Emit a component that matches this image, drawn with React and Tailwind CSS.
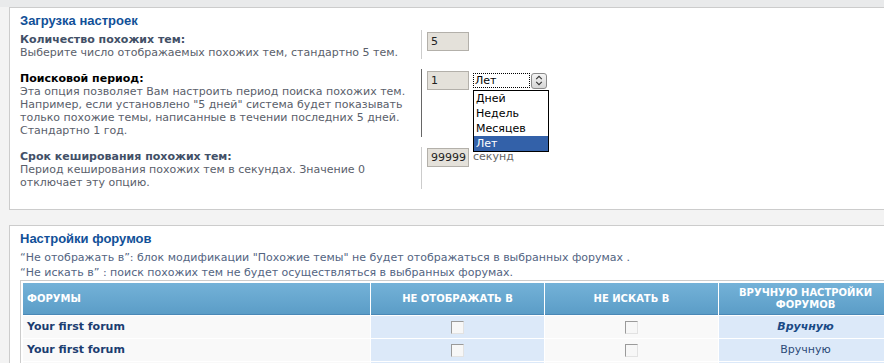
export default function App() {
  const labelCls = "font-bold text-[#425067] leading-[13px]";
  const descCls = "text-[#5a606b] leading-[13px] whitespace-nowrap";
  const inputCls =
    "w-[42px] h-[19px] border border-[#b3b0aa] bg-[#e4e1da] pl-[3px] text-[11px] leading-[17px] text-[#222]";
  const Check = () => (
    <span className="block w-[13px] h-[13px] border border-t-[#9a9a9a] border-l-[#9a9a9a] border-b-[#e2e2e2] border-r-[#e2e2e2] bg-[#f7f7f7]" />
  );
  return (
    <div className="w-[884px] h-[363px] overflow-hidden bg-[#f3f3f3] font-['DejaVu_Sans',Verdana,sans-serif] text-[11px]">
      <div className="w-[930px]">
        <div className="h-[7px] bg-[#e9eaeb]" />
        {/* Panel 1 */}
        <section className="ml-[9px] border-t border-l border-b border-[#cccccc] bg-white pl-[10px] pt-[4px] pb-[20px]">
          <h3 className="h-[18px] font-['Liberation_Sans',Arial,sans-serif] font-bold text-[13px] leading-[17px] text-[#115098]">
            Загрузка настроек
          </h3>
          <div className="flex flex-col gap-[10px]">
            {/* Row 1 */}
            <div className="flex">
              <div className="w-[402px] border-r border-[#cccccc] pt-[3px]">
                <div className={labelCls}>Количество похожих тем:</div>
                <div className={descCls}>Выберите число отображаемых похожих тем, стандартно 5 тем.</div>
              </div>
              <div className="pl-[5px] pt-[2px]">
                <div className={inputCls}>5</div>
              </div>
            </div>
            {/* Row 2 */}
            <div className="flex">
              <div className="w-[402px] border-r border-[#666666] pt-[3px]">
                <div className="font-bold text-black leading-[13px]">Поисковой период:</div>
                <div className={descCls}>
                  Эта опция позволяет Вам настроить период поиска похожих тем.
                  <br />
                  Например, если установлено "5 дней" система будет показывать
                  <br />
                  только похожие темы, написанные в течении последних 5 дней.
                  <br />
                  Стандартно 1 год.
                </div>
              </div>
              <div className="pl-[5px] pt-[2px] flex items-start">
                <div className={inputCls}>1</div>
                <div className="relative ml-[4px] mt-[1px] z-10">
                  <div className="flex items-center h-[17px] w-[75px]">
                    <div className="w-[57px] h-[15px] border border-dotted border-black pl-[1px] text-[11px] leading-[13px] text-black">
                      Лет
                    </div>
                    <div className="ml-[1px] w-[16px] h-[16px] rounded-[3px] border border-[#8a8a8a] bg-linear-to-b from-[#f4f4f4] to-[#d6d6d6] flex items-center justify-center">
                      <svg width="8" height="11" viewBox="0 0 8 11" fill="none" stroke="#333" strokeWidth="1.1">
                        <path d="M1.2 4.2 L4 1.4 L6.8 4.2" />
                        <path d="M1.2 6.8 L4 9.6 L6.8 6.8" />
                      </svg>
                    </div>
                  </div>
                  <div className="absolute left-0 top-[18px] w-[76px] border border-black bg-white">
                    <div className="h-[15px] leading-[15px] pl-[2px] text-black">Дней</div>
                    <div className="h-[15px] leading-[15px] pl-[2px] text-black">Недель</div>
                    <div className="h-[15px] leading-[15px] pl-[2px] text-black">Месяцев</div>
                    <div className="h-[15px] leading-[15px] pl-[2px] bg-[#3361a9] text-white">Лет</div>
                  </div>
                </div>
              </div>
            </div>
            {/* Row 3 */}
            <div className="flex">
              <div className="w-[402px] border-r border-[#cccccc] pt-[3px]">
                <div className={labelCls}>Срок кеширования похожих тем:</div>
                <div className={descCls}>
                  Период кеширования похожих тем в секундах. Значение 0
                  <br />
                  отключает эту опцию.
                </div>
              </div>
              <div className="pl-[5px] pt-[1px] flex items-center self-start">
                <div className={inputCls}>99999</div>
                <span className="ml-[4px] text-[#666]">секунд</span>
              </div>
            </div>
          </div>
        </section>

        {/* Panel 2 */}
        <section className="mt-[15px] ml-[9px] border-t border-l border-[#cccccc] bg-white pl-[10px] pt-[4px] pb-[20px]">
          <h3 className="h-[16px] font-['Liberation_Sans',Arial,sans-serif] font-bold text-[13px] leading-[17px] text-[#115098]">
            Настройки форумов
          </h3>
          <div className="mt-[4px] text-[#536482] leading-[15px] whitespace-nowrap">
            <div>“Не отображать в”: блок модификации "Похожие темы" не будет отображаться в выбранных форумах .</div>
            <div>“Не искать в” : поиск похожих тем не будет осуществляться в выбранных форумах.</div>
          </div>
          <div className="w-max border border-[#cccccc] p-[2px] bg-white">
            <div className="grid grid-cols-[347px_173px_173px_173px] gap-px bg-white">
              <div className="h-[32px] bg-linear-to-b from-[#74b2d8] to-[#5b9dc7] border-b border-[#4a88b6] flex items-center pl-[4px] text-white font-bold text-[10px] uppercase">
                Форумы
              </div>
              <div className="h-[32px] bg-linear-to-b from-[#74b2d8] to-[#5b9dc7] border-b border-[#4a88b6] flex items-center justify-center text-white font-bold text-[10px]">
                НЕ ОТОБРАЖАТЬ В
              </div>
              <div className="h-[32px] bg-linear-to-b from-[#74b2d8] to-[#5b9dc7] border-b border-[#4a88b6] flex items-center justify-center text-white font-bold text-[10px]">
                НЕ ИСКАТЬ В
              </div>
              <div className="h-[32px] bg-linear-to-b from-[#74b2d8] to-[#5b9dc7] border-b border-[#4a88b6] flex items-center justify-center text-center text-white font-bold text-[10px] leading-[12px]">
                ВРУЧНУЮ НАСТРОЙКИ
                <br />
                ФОРУМОВ
              </div>

              <div className="h-[22px] bg-[#f9f9f9] flex items-center pl-[4px] font-bold text-[#1b3d70]">Your first forum</div>
              <div className="h-[22px] bg-[#dce9f9] flex items-center justify-center"><Check /></div>
              <div className="h-[22px] bg-[#f9f9f9] flex items-center justify-center"><Check /></div>
              <div className="h-[22px] bg-[#dce9f9] flex items-center justify-center font-bold italic text-[#1a4a86]">Вручную</div>

              <div className="h-[22px] bg-[#f9f9f9] flex items-center pl-[4px] font-bold text-[#1b3d70]">Your first forum</div>
              <div className="h-[22px] bg-[#dce9f9] flex items-center justify-center"><Check /></div>
              <div className="h-[22px] bg-[#f9f9f9] flex items-center justify-center"><Check /></div>
              <div className="h-[22px] bg-[#dce9f9] flex items-center justify-center text-[#2d4a78]">Вручную</div>

              <div className="h-[22px] bg-[#f9f9f9]" />
              <div className="h-[22px] bg-[#dce9f9]" />
              <div className="h-[22px] bg-[#f9f9f9]" />
              <div className="h-[22px] bg-[#dce9f9]" />
            </div>
          </div>
        </section>
      </div>
    </div>
  );
}
